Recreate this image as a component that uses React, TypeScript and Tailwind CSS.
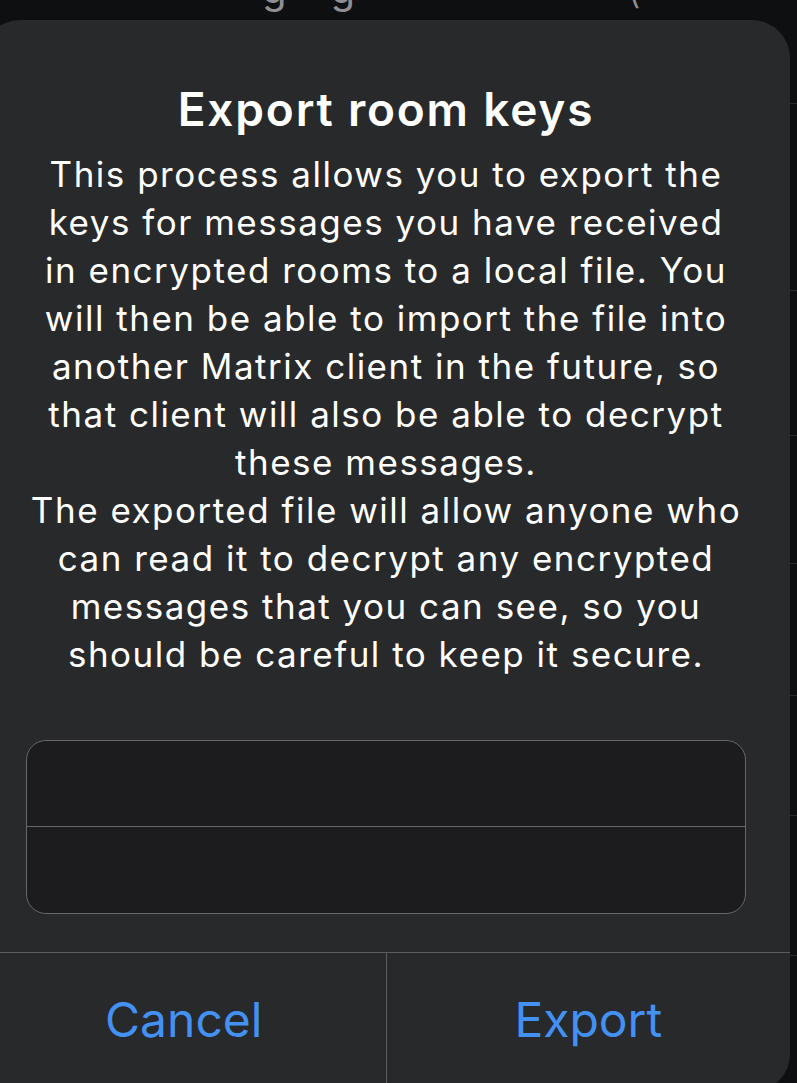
import React from 'react';

const bodyLines = [
  'This process allows you to export the',
  'keys for messages you have received',
  'in encrypted rooms to a local file. You',
  'will then be able to import the file into',
  'another Matrix client in the future, so',
  'that client will also be able to decrypt',
  'these messages.',
  'The exported file will allow anyone who',
  'can read it to decrypt any encrypted',
  'messages that you can see, so you',
  'should be careful to keep it secure.',
];

// rows of the screen behind the alert, only their right edge peeks out
const bgRows = [104, 187, 145, 128, 132, 120, 140, 130];

export default function App() {
  return (
    <div className="relative h-[1083px] w-full overflow-hidden bg-[#0e0f11] font-['Inter',sans-serif]">
      {/* page behind the alert */}
      <div className="flex h-[22px] items-end overflow-hidden text-[40px] leading-none text-[#8e8e93]">
        <div className="mb-[13px] flex whitespace-nowrap">
          <span className="ml-[262px]">g</span>
          <span className="ml-[44px]">g</span>
          <span className="ml-[272px] font-light">(</span>
        </div>
      </div>
      <div className="flex flex-col">
        {bgRows.map((h, i) => (
          <div
            key={i}
            className="border-b border-[#2a2b2e]"
            style={{ height: i === 0 ? h - 22 : h }}
          />
        ))}
      </div>

      {/* alert */}
      <div className="absolute left-[-18px] top-[20px] flex h-[1072px] w-[808px] flex-col overflow-hidden rounded-[38px] bg-[#28292b] text-white">
        <div className="flex flex-col items-center pt-[62px]">
          <h1 className="h-[54px] whitespace-nowrap text-[46px] font-semibold leading-[54px] tracking-[1.8px]">Export room keys</h1>
          <p className="mt-[14px] whitespace-nowrap text-center text-[35px] leading-[48px] tracking-[1.5px]">
            {bodyLines.map((l, i) => (
              <React.Fragment key={i}>
                {l}
                {i < bodyLines.length - 1 && <br />}
              </React.Fragment>
            ))}
          </p>
        </div>

        <div className="mx-[44px] mt-[62px] flex flex-col overflow-hidden rounded-[20px] border border-[#68686c] bg-[#1c1c1e]">
          <div className="h-[86px] border-b border-[#68686c]" />
          <div className="h-[86px]" />
        </div>

        <div className="mt-[38px] flex flex-1 border-t border-[#5c5c60]">
          <button className="flex h-full flex-1 items-start justify-center pt-[37px] text-[48px] leading-[60px] text-[#4391f3]">
            Cancel
          </button>
          <div className="w-px bg-[#5c5c60]" />
          <button className="flex h-full flex-1 items-start justify-center pt-[37px] text-[48px] leading-[60px] text-[#4391f3]">
            Export
          </button>
        </div>
      </div>
    </div>
  );
}
